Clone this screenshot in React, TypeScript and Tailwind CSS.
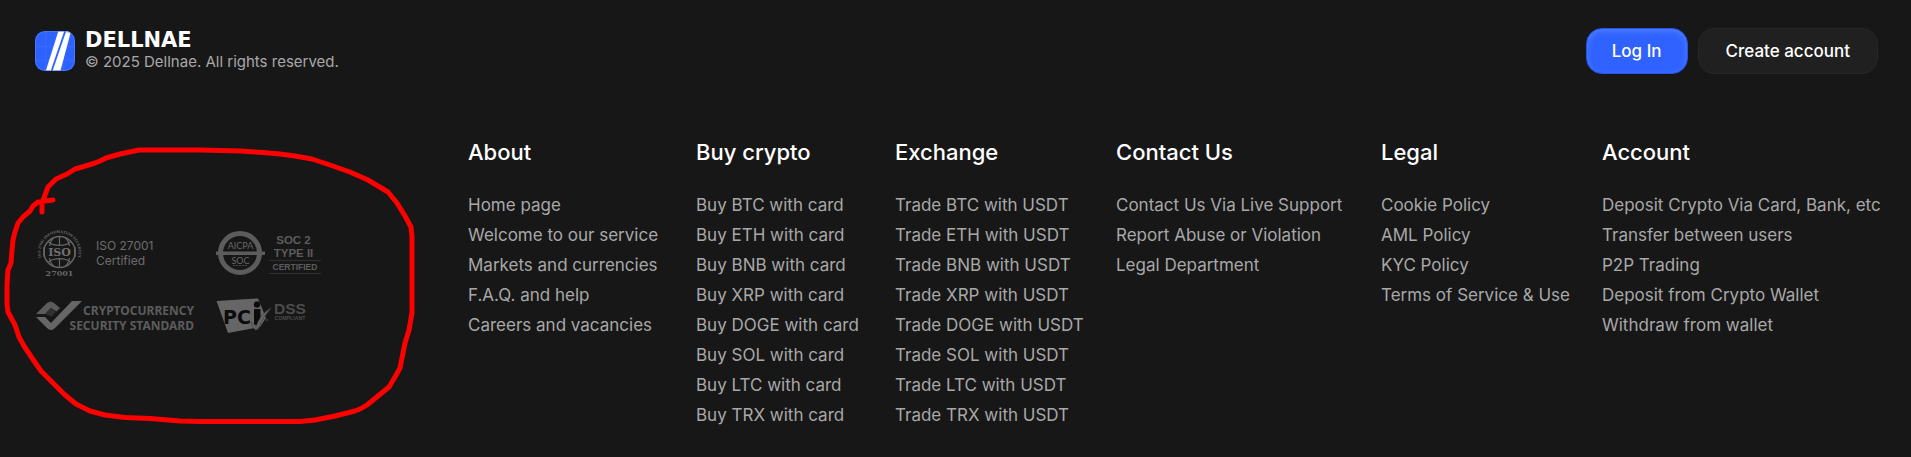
const columns = [
  { title: 'About', links: ['Home page', 'Welcome to our service', 'Markets and currencies', 'F.A.Q. and help', 'Careers and vacancies'] },
  {
    title: 'Buy crypto',
    links: ['BTC', 'ETH', 'BNB', 'XRP', 'DOGE', 'SOL', 'LTC', 'TRX'].map((coin) => `Buy ${coin} with card`),
  },
  {
    title: 'Exchange',
    links: ['BTC', 'ETH', 'BNB', 'XRP', 'DOGE', 'SOL', 'LTC', 'TRX'].map((coin) => `Trade ${coin} with USDT`),
  },
  { title: 'Contact Us', links: ['Contact Us Via Live Support', 'Report Abuse or Violation', 'Legal Department'] },
  { title: 'Legal', links: ['Cookie Policy', 'AML Policy', 'KYC Policy', 'Terms of Service & Use'] },
  {
    title: 'Account',
    links: [
      'Deposit Crypto Via Card, Bank, etc',
      'Transfer between users',
      'P2P Trading',
      'Deposit from Crypto Wallet',
      'Withdraw from wallet',
    ],
  },
];

function LogoMark() {
  return (
    <svg className="size-10 shrink-0" viewBox="0 0 41 41" aria-hidden="true">
      <defs>
        <clipPath id="mark">
          <rect width="41" height="41" rx="10" />
        </clipPath>
      </defs>
      <g clipPath="url(#mark)">
        <rect width="41" height="41" fill="#2f62ff" />
        <path d="M0 16H41M0 30H41M11 0V41M29 0V41" stroke="#4976ff" strokeWidth="1" opacity="0.5" />
        <path d="M24 0H30L16 41H11Z" fill="#fff" />
        <path d="M32 0H37L26 41H18Z" fill="#fff" />
        <rect x="0.5" y="0.5" width="40" height="40" rx="10" fill="none" stroke="#5580ff" opacity="0.7" />
      </g>
    </svg>
  );
}

function IsoSeal() {
  return (
    <svg className="h-12 w-12 shrink-0" viewBox="0 0 48 48" role="img" aria-label="ISO 27001 information security">
      <defs>
        <path id="arc" d="M6.8 32A19 19 0 1 1 40.2 32" />
      </defs>
      <g fill="none" stroke="#666" strokeWidth="1.2">
        <circle cx="23.5" cy="23" r="15.6" strokeWidth="1.5" />
        <path d="M12.500 13C18 17.500 29 17.500 34.500 13M12.500 33C18 28.500 29 28.500 34.500 33M23.500 7.500V16M23.500 30V38.500M18 8.500Q14 12 13.500 17M29 8.500Q33 12 33.500 17M13.500 29Q14 34 18 37.500M33.500 29Q33 34 29 37.500" />
      </g>
      <rect x="9.500" y="17.500" width="28" height="11" fill="#171717" />
      <path d="M8.200 18V28M38.800 18V28" stroke="#666" strokeWidth="1.500" />
      <text x="23.500" y="27" textAnchor="middle" fontSize="11" fontWeight="700" fontFamily="DejaVu Serif, serif" fill="#707070">ISO</text>
      <text fontSize="4" fontWeight="700" fontFamily="Liberation Serif, serif" fill="#707070">
        <textPath href="#arc" startOffset="50%" textAnchor="middle">ISO 27001 INFORMATION SECURITY</textPath>
      </text>
      <text x="23.500" y="47" textAnchor="middle" fontSize="8" fontWeight="700" fontFamily="DejaVu Serif, serif" fill="#666">27001</text>
    </svg>
  );
}

function SocBadge() {
  return (
    <svg className="h-12 w-[106px]" viewBox="0 0 106 48" role="img" aria-label="AICPA SOC 2 Type II certified">
      <circle cx="24" cy="24" r="19.500" fill="none" stroke="#5c5c5c" strokeWidth="5" />
      <rect x="0" y="22.500" width="49" height="3.500" fill="#5c5c5c" />
      <g fill="#666" textAnchor="middle" fontFamily="Lato, sans-serif">
        <text x="24.500" y="20" fontSize="9">AICPA</text>
        <text x="24.500" y="34.500" fontSize="9">SOC</text>
      </g>
      <path d="M17 36.500H32" stroke="#484848" strokeDasharray="2 1" />
      <g fill="#5c5c5c" textAnchor="middle" fontFamily="Liberation Sans, sans-serif" fontWeight="700">
        <text x="77.500" y="14.500" fontSize="11.500">SOC 2</text>
        <text x="77.500" y="28" fontSize="11.500">TYPE II</text>
        <text x="79" y="41" fontSize="8.500">CERTIFIED</text>
      </g>
      <path d="M53 31.500H105M53 44.500H105" stroke="#303030" />
    </svg>
  );
}

function CryptoBadge() {
  return (
    <svg className="h-9 w-[160px]" viewBox="0 0 160 36" role="img" aria-label="Cryptocurrency security standard">
      <path d="M0 16L11 5Q14.500 2 18 5L24 10L20.500 13.500L15 10L9 16Z" fill="#5c5c5c" />
      <path d="M0 19H9L15 25L36 3H46L19 30Q15 34 11 30Z" fill="#666" />
      <path d="M9 16L15 10L20 14L15.500 18.500Z" fill="#303030" />
      <g fill="#5c5c5c" textAnchor="end" fontFamily="Noto Sans, sans-serif" fontWeight="700" fontSize="12">
        <text x="158" y="17">CRYPTOCURRENCY</text>
        <text x="158" y="31.500">SECURITY STANDARD</text>
      </g>
    </svg>
  );
}

function PciBadge() {
  return (
    <svg className="h-9 w-[92px]" viewBox="0 0 92 36" role="img" aria-label="PCI DSS compliant">
      <path d="M0.500 3L42 0.500L50 20L44 29L12 35Z" fill="#666" />
      <text x="7" y="25.500" fontSize="19" fontWeight="700" fontFamily="DejaVu Sans, sans-serif" fill="#0c0c0c">PC</text>
      <path d="M38 11H44.500V27H38Z" fill="#0c0c0c" />
      <circle cx="41" cy="6.500" r="3.200" fill="#0c0c0c" />
      <path d="M34 24Q38 24 40 29Q44 16 55 10Q47 19 42 31Q39 33 37.500 30Z" fill="#666" stroke="#444" strokeWidth="0.700" />
      <circle cx="51" cy="22" r="0.800" fill="#666" />
      <g fill="#4c4c4c" fontFamily="Liberation Sans, sans-serif" fontWeight="700">
        <text x="58" y="16" fontSize="15.500">DSS</text>
        <text x="58.500" y="21.500" fontSize="5.200">COMPLIANT</text>
      </g>
    </svg>
  );
}

function Highlight() {
  return (
    <svg className="pointer-events-none absolute top-0 left-0 h-[440px] w-[430px]" viewBox="0 0 430 440" aria-hidden="true">
      <path
        d="M42 212V203L48 187L56 179L67 174L75 169L82 167L95 163L100 161L106 158L120 154L139 150H200L240 151L263 152.500L280 154L295 156L312 159L330 165L350 172L368 180L388 192L397 203L405 216L411 227L412 237V313L409 330L405 343L402 358L400 368L395 377L389 387L378 396L367 405Q361 409 355 411L335 416L315 420L300 421.500H200L180 421L150 418.500L125 417.500L105 415L90 411L76 404L65 395L53 383L41 371L32 358L24 346L19 337L15 325L8 312L7 304V285L8 270L11 263L12 250L13 240L15 232L18 223L23 217L30 211L33 206L38 202L53 200"
        fill="none"
        stroke="#f00"
        strokeWidth="5"
        strokeLinecap="round"
        strokeLinejoin="round"
      />
    </svg>
  );
}

export default function App() {
  return (
    <footer className="relative min-h-screen bg-[#171717] pt-7 pr-[33px] pb-6 pl-[35px] font-['Inter',sans-serif] text-white">
      <div className="flex items-center justify-between">
        <div className="flex items-center gap-2.5">
          <LogoMark />
          <div className="pt-0.5">
            <p className="font-['DejaVu_Sans',sans-serif] text-[21px] leading-5 font-bold">DELLNAE</p>
            <p className="text-[15px] leading-6 text-[#a8a8a8]">© 2025 Dellnae. All rights reserved.</p>
          </div>
        </div>
        <div className="flex gap-2.5 text-[17px] font-medium">
          <button className="h-[46px] rounded-2xl border border-[#2554e8] bg-[#2f62ff] px-[25px] pt-0.5 shadow-[inset_0_2px_6px_#5580ff]">Log In</button>
          <button className="h-[46px] rounded-2xl border border-[#272727] bg-[#202020] px-[27px] pt-0.5">Create account</button>
        </div>
      </div>

      <div className="mt-[63px] grid grid-cols-[433fr_228fr_199fr_221fr_265fr_221fr_276fr]">
        <div className="grid grid-cols-[180px_180px] content-center gap-y-[21px] pb-1 pl-px">
          <div className="flex items-center gap-3">
            <IsoSeal />
            <p className="text-xs leading-[15px] text-[#6c6c6c]">
              ISO 27001
              <br />
              Certified
            </p>
          </div>
          <SocBadge />
          <CryptoBadge />
          <PciBadge />
        </div>
        {columns.map((column) => (
          <nav key={column.title} aria-label={column.title} className="min-w-0 whitespace-nowrap">
            <h2 className="text-[22px] leading-[30px] font-medium">{column.title}</h2>
            <ul className="mt-[23px] text-[17px] leading-[30px] text-[#a8a8a8]">
              {column.links.map((link) => (
                <li key={link}>
                  <a href="#">{link}</a>
                </li>
              ))}
            </ul>
          </nav>
        ))}
      </div>
      <Highlight />
    </footer>
  );
}
